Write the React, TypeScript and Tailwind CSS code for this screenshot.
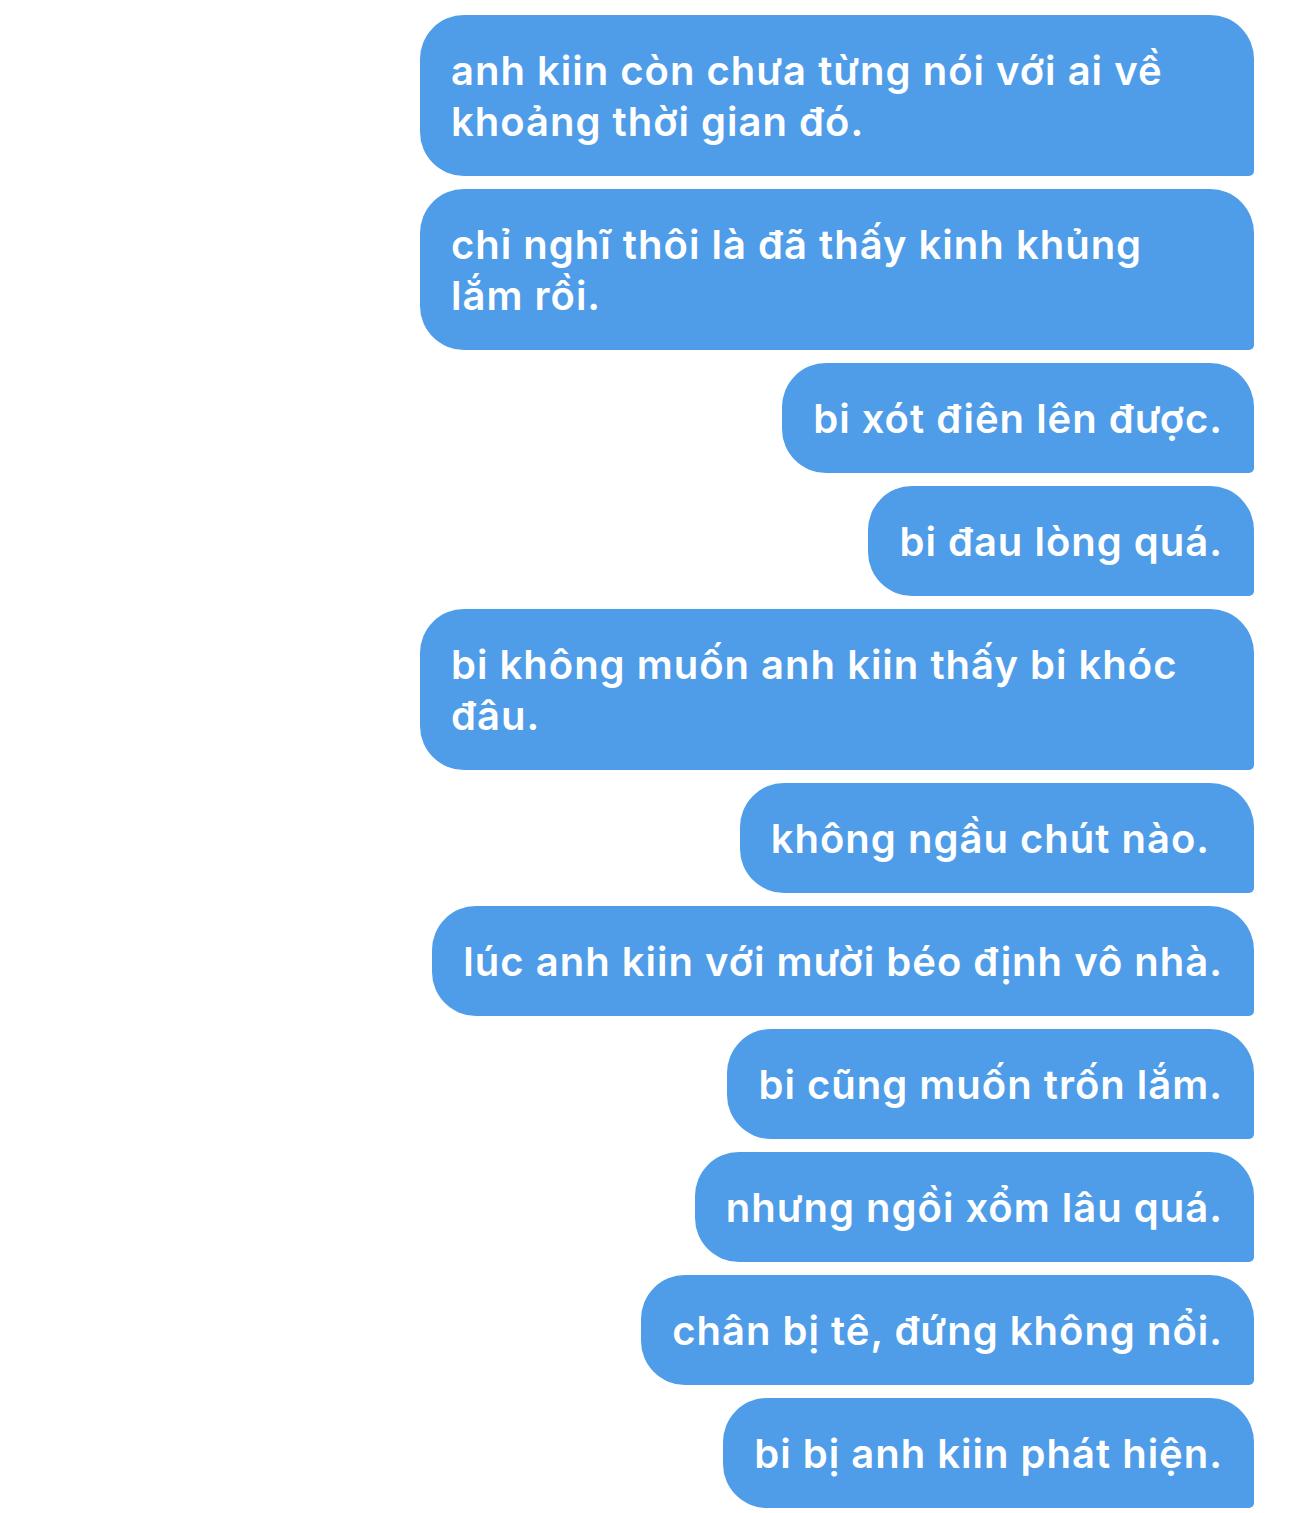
import React from 'react';

type Msg = { text: string; wide?: boolean };

const messages: Msg[] = [
  { text: 'anh kiin còn chưa từng nói với ai về khoảng thời gian đó.' },
  { text: 'chỉ nghĩ thôi là đã thấy kinh khủng lắm rồi.' },
  { text: 'bi xót điên lên được.' },
  { text: 'bi đau lòng quá.' },
  { text: 'bi không muốn anh kiin thấy bi khóc đâu.' },
  { text: 'không ngầu chút nào.', wide: true },
  { text: 'lúc anh kiin với mười béo định vô nhà.' },
  { text: 'bi cũng muốn trốn lắm.' },
  { text: 'nhưng ngồi xổm lâu quá.' },
  { text: 'chân bị tê, đứng không nổi.' },
  { text: 'bi bị anh kiin phát hiện.' },
];

export default function App() {
  return (
    <div
      className="min-h-[1513px] w-[1290px] bg-white pt-[15px] pr-[36px] flex flex-col items-end gap-[13px]"
      style={{ fontFamily: 'Inter, "Noto Sans", sans-serif' }}
    >
      {messages.map((m, i) => (
        <div
          key={i}
          className={
            'max-w-[834px] bg-[#4f9de8] text-white text-[40px] font-semibold leading-[51px] pl-[31px] py-[29.5px] rounded-[44px] rounded-br-[5px] tracking-[1px] ' +
            (m.wide ? 'pr-[44px]' : 'pr-[31px]')
          }
        >
          {m.text}
        </div>
      ))}
    </div>
  );
}
